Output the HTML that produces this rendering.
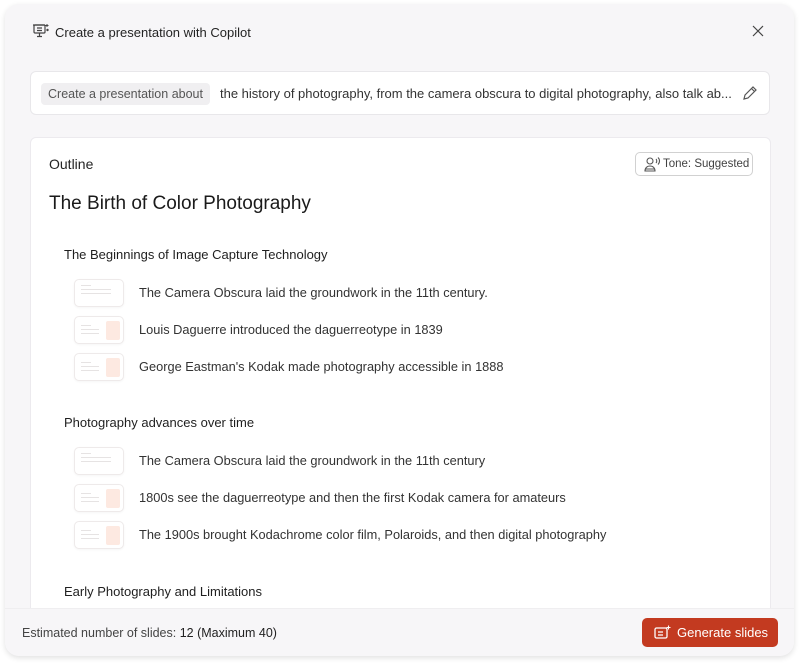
<!DOCTYPE html>
<html><head><meta charset="utf-8">
<style>
*{margin:0;padding:0;box-sizing:border-box}
html,body{width:800px;height:665px;background:#fff;font-family:"Liberation Sans","DejaVu Sans",sans-serif;color:#242424;overflow:hidden}
.panel{position:absolute;left:5px;top:4px;width:789px;height:652px;background:#f7f6f8;border-radius:14px;box-shadow:0 2px 6px rgba(0,0,0,.12);overflow:hidden}
.title{position:absolute;left:50px;top:21px;font-size:13px;color:#242424}
.ticon{position:absolute;left:27px;top:19px}
.close{position:absolute;left:747px;top:21px}
.prompt{position:absolute;left:25px;top:67px;width:740px;height:44px;background:#fff;border:1px solid #e8e7ea;border-radius:6px}
.chip{position:absolute;left:10px;top:11px;height:22px;padding:0 7px;background:#f0eff1;border-radius:4px;font-size:12.5px;color:#555;line-height:22px}
.ptext{position:absolute;left:189px;top:14px;font-size:13px;color:#333;white-space:nowrap}
.pencil{position:absolute;left:710px;top:13px}
.card{position:absolute;left:25px;top:133px;width:741px;height:480px;background:#fff;border:1px solid #eceaee;border-radius:6px}
.outline{position:absolute;left:18px;top:18px;font-size:14px;color:#242424}
.tone{position:absolute;left:604px;top:14px;width:118px;height:24px;border:1px solid #d1d1d1;border-radius:5px;font-size:11.5px;color:#424242;line-height:22px;padding-left:27px;white-space:nowrap}
.tone svg{position:absolute;left:7px;top:3px}
.h1{position:absolute;left:18px;top:55px;font-size:19px;color:#1a1a1a}
.h2{position:absolute;left:33px;font-size:13px;color:#1f1f1f}
.item{position:absolute;left:43px;height:28px}
.thumb{position:absolute;left:0;top:0;width:50px;height:28px;border:1px solid #eeeaea;border-radius:5px;background:#fff;box-shadow:0 1px 2px rgba(0,0,0,.04)}
.thumb i{position:absolute;height:1px;background:#e6e3e3}
.thumb b{position:absolute;left:31px;top:4px;width:14px;height:19px;background:#fde9e1;border-radius:2px}
.item span{position:absolute;left:65px;top:6px;font-size:12.8px;color:#333;white-space:nowrap}
.footer{position:absolute;left:0;top:604px;width:789px;height:48px;background:#f7f6f8;border-top:1px solid #efeef0}
.est{position:absolute;left:17px;top:17px;font-size:12.5px;color:#444}
.est b{font-weight:normal;color:#222}
.btn{position:absolute;left:637px;top:9px;width:136px;height:29px;background:#c33a20;border-radius:5px;color:#fff;font-size:13px;line-height:29px;padding-left:35px}
.btn svg{position:absolute;left:12px;top:7px}
</style></head><body>
<div class="panel">
 <svg class="ticon" width="18" height="16" viewBox="0 0 18 16" fill="none" stroke="#444" stroke-width="1.2"><rect x="2" y="2" width="11" height="8" rx="1"/><path d="M1 2h12M7.5 10v3M5 13.5h5M5 5h5M5 7.5h5"/><path d="M15 1v3M13.5 2.5h3" stroke-width="1"/><circle cx="15.5" cy="7" r=".6" fill="#444"/></svg>
 <div class="title">Create a presentation with Copilot</div>
 <svg class="close" width="12" height="12" viewBox="0 0 12 12" stroke="#444" stroke-width="1.2"><path d="M1 1l10 10M11 1L1 11"/></svg>
 <div class="prompt">
  <div class="chip">Create a presentation about</div>
  <div class="ptext">the history of photography, from the camera obscura to digital photography, also talk ab...</div>
  <svg class="pencil" width="17" height="17" viewBox="0 0 17 17" fill="none" stroke="#555" stroke-width="1.2"><path d="M3 14l1-4 8-8 3 3-8 8-4 1zM10.5 3.5l3 3"/></svg>
 </div>
 <div class="card">
  <div class="outline">Outline</div>
  <div class="tone"><svg width="18" height="17" viewBox="0 0 18 17" fill="none" stroke="#555" stroke-width="1.1"><circle cx="7" cy="5" r="3"/><path d="M2 15c0-3 2-5 5-5s5 2 5 5zM2 13h10M13 3c1 1 1 3 0 4M15 1.5c2 2 2 5 0 7"/></svg>Tone: Suggested</div>
  <div class="h1">The Birth of Color Photography</div>

  <div class="h2" style="top:109px">The Beginnings of Image Capture Technology</div>
  <div class="item" style="top:141px"><div class="thumb"><i style="left:6px;top:5px;width:10px"></i><i style="left:6px;top:9px;width:30px"></i><i style="left:6px;top:13px;width:30px"></i></div><span>The Camera Obscura laid the groundwork in the 11th century.</span></div>
  <div class="item" style="top:178px"><div class="thumb"><i style="left:6px;top:8px;width:10px"></i><i style="left:6px;top:12px;width:18px"></i><i style="left:6px;top:16px;width:18px"></i><b></b></div><span>Louis Daguerre introduced the daguerreotype in 1839</span></div>
  <div class="item" style="top:215px"><div class="thumb"><i style="left:6px;top:8px;width:10px"></i><i style="left:6px;top:12px;width:18px"></i><i style="left:6px;top:16px;width:18px"></i><b></b></div><span>George Eastman's Kodak made photography accessible in 1888</span></div>

  <div class="h2" style="top:277px">Photography advances over time</div>
  <div class="item" style="top:309px"><div class="thumb"><i style="left:6px;top:5px;width:10px"></i><i style="left:6px;top:9px;width:30px"></i><i style="left:6px;top:13px;width:30px"></i></div><span>The Camera Obscura laid the groundwork in the 11th century</span></div>
  <div class="item" style="top:346px"><div class="thumb"><i style="left:6px;top:8px;width:10px"></i><i style="left:6px;top:12px;width:18px"></i><i style="left:6px;top:16px;width:18px"></i><b></b></div><span>1800s see the daguerreotype and then the first Kodak camera for amateurs</span></div>
  <div class="item" style="top:383px"><div class="thumb"><i style="left:6px;top:8px;width:10px"></i><i style="left:6px;top:12px;width:18px"></i><i style="left:6px;top:16px;width:18px"></i><b></b></div><span>The 1900s brought Kodachrome color film, Polaroids, and then digital photography</span></div>

  <div class="h2" style="top:446px">Early Photography and Limitations</div>
 </div>
 <div class="footer">
  <div class="est">Estimated number of slides: <b>12 (Maximum 40)</b></div>
  <div class="btn"><svg width="17" height="15" viewBox="0 0 17 15" fill="none" stroke="#fff" stroke-width="1.3"><rect x="1" y="3" width="12" height="10" rx="1.5"/><path d="M4 7h5M4 10h5"/><path d="M14.5 0.5v4M12.5 2.5h4" stroke-width="1.1"/></svg>Generate slides</div>
 </div>
</div>
</body></html>
